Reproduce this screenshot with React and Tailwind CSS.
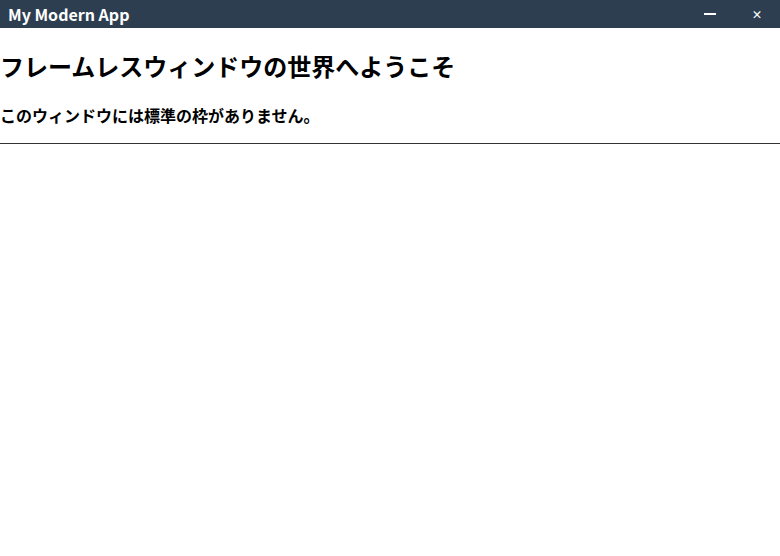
export default function App() {
  return (
    <div
      className="w-[780px] h-[556px] bg-white flex flex-col overflow-hidden"
      style={{ fontFamily: '"Noto Sans CJK JP", "Noto Sans", sans-serif' }}
    >
      <div className="h-7 bg-[#2c3e50] flex items-center justify-between text-white shrink-0">
        <span className="pl-2 text-base font-bold leading-none">My Modern App</span>
        <div className="flex h-full">
          <button className="w-[48px] h-full flex items-center justify-center">
            <span className="block w-[12px] h-[2px] bg-white"></span>
          </button>
          <button className="w-[46px] h-full flex items-center justify-center text-[11px] font-bold leading-none">
            ×
          </button>
        </div>
      </div>
      <div className="border-b border-[#333]">
        <h2 className="mt-[20px] text-2xl font-bold leading-9 text-black">
          フレームレスウィンドウの世界へようこそ
        </h2>
        <p className="mt-[19px] mb-[16px] text-base font-bold leading-6 text-black">
          このウィンドウには標準の枠がありません。
        </p>
      </div>
    </div>
  );
}
